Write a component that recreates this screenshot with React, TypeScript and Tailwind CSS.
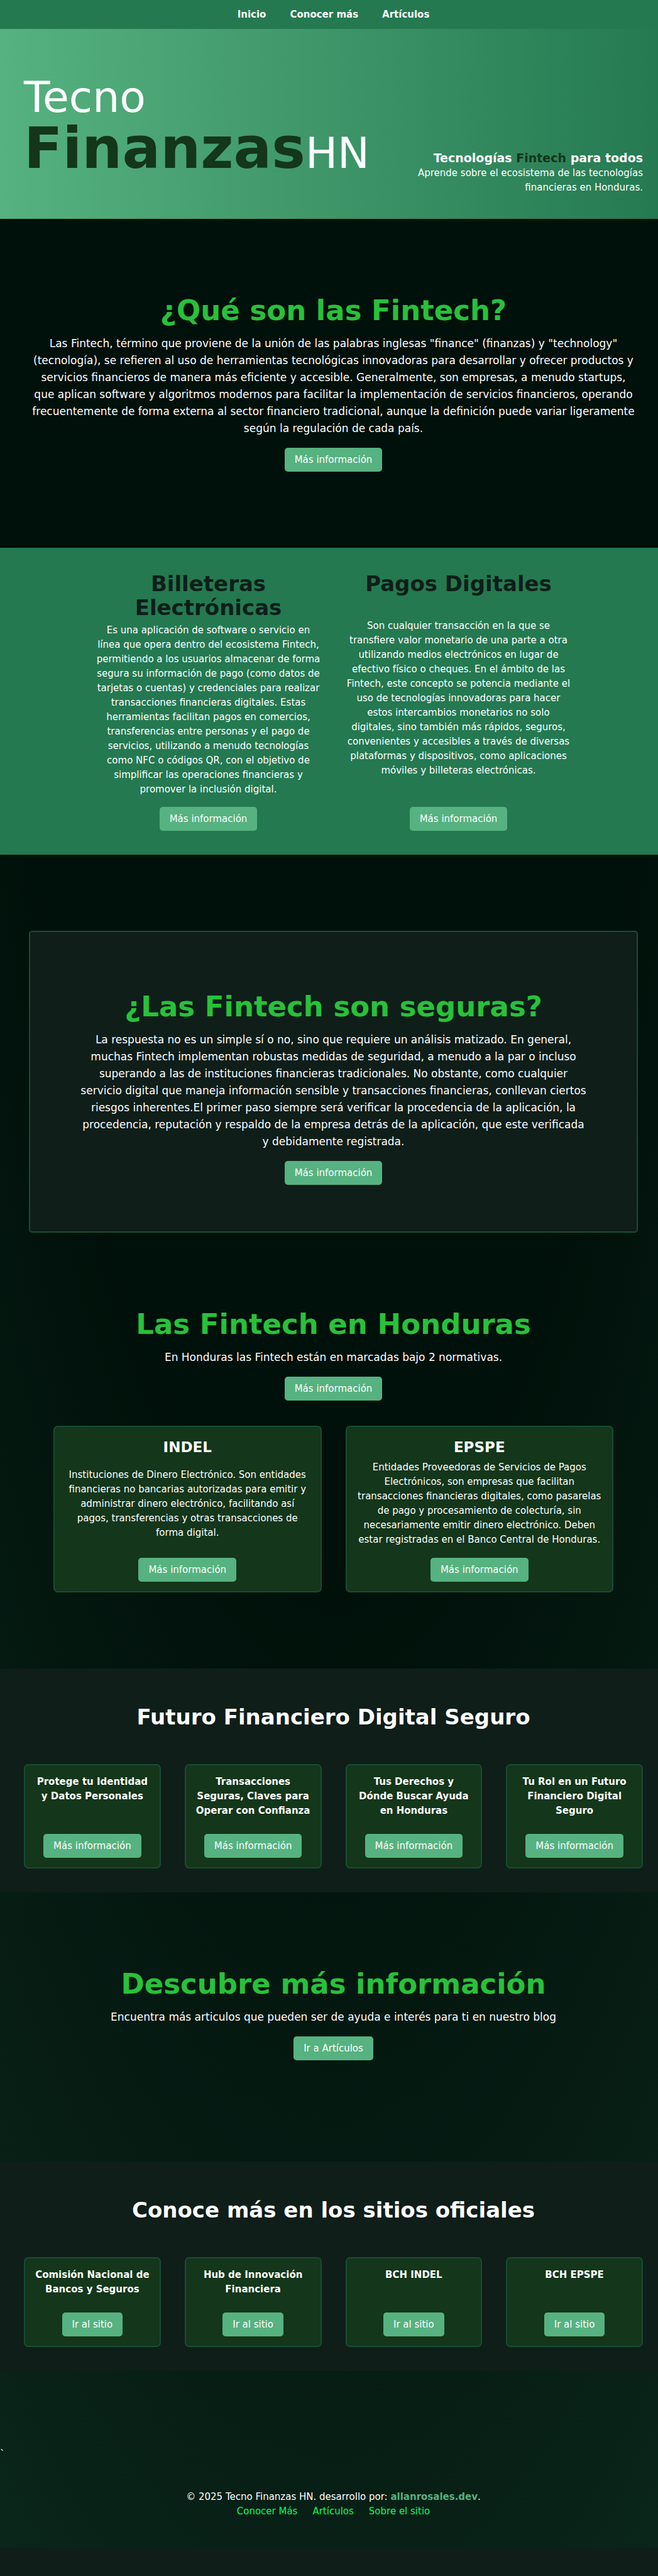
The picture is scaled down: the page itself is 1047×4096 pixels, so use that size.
import React from "react";

const MORE = "Más información";

function Btn({ children = MORE }: { children?: React.ReactNode }) {
  return (
    <a
      href="#"
      className="inline-block rounded-[5px] bg-[#56b280] px-4 py-2 text-[15px] leading-[22px] text-white"
    >
      {children}
    </a>
  );
}

function Intro({
  title,
  action = MORE,
  children,
}: {
  title: string;
  action?: string;
  children: React.ReactNode;
}) {
  return (
    <div className="flex flex-col items-center text-center">
      <h2 className="mb-3 text-[45px] leading-[54px] font-bold text-[#28c139]">{title}</h2>
      <p className="mb-[17px] text-[17px] leading-[27px]">{children}</p>
      <Btn>{action}</Btn>
    </div>
  );
}

function Wallet({ title, children }: { title: string; children: React.ReactNode }) {
  return (
    <article className="flex w-[360px] flex-col items-center">
      <h3 className="text-[34px] leading-[38px] font-bold text-[#0f1e19]">{title}</h3>
      <p className="my-auto py-[6px] leading-[23px]">{children}</p>
      <div className="mt-2.5 flex">
        <Btn />
      </div>
    </article>
  );
}

function Norm({ title, children }: { title: string; children: React.ReactNode }) {
  return (
    <article className="flex flex-1 flex-col items-center rounded-[7px] border-2 border-[#184d33] bg-[#14361a] px-4 py-[15px]">
      <h3 className="text-[23px] leading-[34px] font-bold">{title}</h3>
      <p className="my-auto py-1 leading-[23px]">{children}</p>
      <div className="mt-[13px] flex">
        <Btn />
      </div>
    </article>
  );
}

function Cards({ title, items, action }: { title: string; items: string[]; action: string }) {
  return (
    <section className="bg-[#0f1e19] px-[38px] pt-[52px] pb-[38px] text-center">
      <h2 className="text-[34px] leading-[51px] font-bold">{title}</h2>
      <div className="mt-[49px] grid grid-cols-4 gap-[38px]">
        {items.map((t) => (
          <article
            key={t}
            className="flex flex-col items-center justify-between gap-[25px] rounded-[7px] border-2 border-[#184d33] bg-[#14361a] px-3 py-[15px]"
          >
            <h3 className="leading-[23px] font-bold">{t}</h3>
            <Btn>{action}</Btn>
          </article>
        ))}
      </div>
    </section>
  );
}

export default function App() {
  return (
    <div className="overflow-hidden">
      <div className="w-[calc(100%+14px)] bg-[radial-gradient(125%_125%_at_50%_10%,#00100a_40%,#0f2f22_100%)] font-['DejaVu_Sans',sans-serif] text-[15px] leading-[23px] text-white">
        <nav className="flex h-[46px] items-center justify-center gap-[38px] bg-[#247951] font-bold">
          <a href="#">Inicio</a>
          <a href="#">Conocer más</a>
          <a href="#">Artículos</a>
        </nav>

        <header className="flex justify-between bg-linear-to-r from-[#56b280] to-[#247951] px-[38px] pt-[68px] pb-[38px]">
          <h1 className="pb-[26px] text-[68px]">
            <span className="block leading-[82px]">Tecno</span>
            <span className="block leading-[80px]">
              <span className="text-[90px] font-bold text-[#14361a]">Finanzas</span>HN
            </span>
          </h1>
          <div className="w-[380px] self-end text-right">
            <p className="text-[19px] leading-[26px] font-bold">
              Tecnologías <span className="text-[#14361a]">Fintech</span> para todos
            </p>
            <p>Aprende sobre el ecosistema de las tecnologías financieras en Honduras.</p>
          </div>
        </header>

        <section className="px-12 pt-[119px] pb-[121px]">
          <Intro title="¿Qué son las Fintech?">
            Las Fintech, término que proviene de la unión de las palabras inglesas "finance"
            (finanzas) y "technology" (tecnología), se refieren al uso de herramientas tecnológicas
            innovadoras para desarrollar y ofrecer productos y servicios financieros de manera más
            eficiente y accesible. Generalmente, son empresas, a menudo startups, que aplican
            software y algoritmos modernos para facilitar la implementación de servicios
            financieros, operando frecuentemente de forma externa al sector financiero tradicional,
            aunque la definición puede variar ligeramente según la regulación de cada país.
          </Intro>
        </section>

        <section className="flex justify-center gap-[38px] bg-[#247951] py-[38px] text-center">
          <Wallet title="Billeteras Electrónicas">
            Es una aplicación de software o servicio en línea que opera dentro del ecosistema
            Fintech, permitiendo a los usuarios almacenar de forma segura su información de pago
            (como datos de tarjetas o cuentas) y credenciales para realizar transacciones
            financieras digitales. Estas herramientas facilitan pagos en comercios, transferencias
            entre personas y el pago de servicios, utilizando a menudo tecnologías como NFC o
            códigos QR, con el objetivo de simplificar las operaciones financieras y promover la
            inclusión digital.
          </Wallet>
          <Wallet title="Pagos Digitales">
            Son cualquier transacción en la que se transfiere valor monetario de una parte a otra
            utilizando medios electrónicos en lugar de efectivo físico o cheques. En el ámbito de
            las Fintech, este concepto se potencia mediante el uso de tecnologías innovadoras para
            hacer estos intercambios monetarios no solo digitales, sino también más rápidos,
            seguros, convenientes y accesibles a través de diversas plataformas y dispositivos, como
            aplicaciones móviles y billeteras electrónicas.
          </Wallet>
        </section>

        <section className="mx-[46px] mt-[121px] rounded-[5px] border-2 border-[#184d33] bg-[#0f1e19] px-[78px] pt-[92px] pb-[74px]">
          <Intro title="¿Las Fintech son seguras?">
            La respuesta no es un simple sí o no, sino que requiere un análisis matizado. En
            general, muchas Fintech implementan robustas medidas de seguridad, a menudo a la par o
            incluso superando a las de instituciones financieras tradicionales. No obstante, como
            cualquier servicio digital que maneja información sensible y transacciones financieras,
            conllevan ciertos riesgos inherentes.El primer paso siempre será verificar la
            procedencia de la aplicación, la procedencia, reputación y respaldo de la empresa detrás
            de la aplicación, que este verificada y debidamente registrada.
          </Intro>
        </section>

        <section className="px-12 pt-[119px] pb-[121px]">
          <Intro title="Las Fintech en Honduras">
            En Honduras las Fintech están en marcadas bajo 2 normativas.
          </Intro>
          <div className="mx-[37px] mt-10 flex gap-[38px] text-center">
            <Norm title="INDEL">
              Instituciones de Dinero Electrónico. Son entidades financieras no bancarias
              autorizadas para emitir y administrar dinero electrónico, facilitando así pagos,
              transferencias y otras transacciones de forma digital.
            </Norm>
            <Norm title="EPSPE">
              Entidades Proveedoras de Servicios de Pagos Electrónicos, son empresas que facilitan
              transacciones financieras digitales, como pasarelas de pago y procesamiento de
              colecturía, sin necesariamente emitir dinero electrónico. Deben estar registradas en
              el Banco Central de Honduras.
            </Norm>
          </div>
        </section>

        <Cards
          title="Futuro Financiero Digital Seguro"
          action={MORE}
          items={[
            "Protege tu Identidad y Datos Personales",
            "Transacciones Seguras, Claves para Operar con Confianza",
            "Tus Derechos y Dónde\u00a0Buscar Ayuda en Honduras",
            "Tu Rol en un Futuro Financiero Digital Seguro",
          ]}
        />

        <section className="px-12 pt-[119px] pb-[161px]">
          <Intro title="Descubre más información" action="Ir a Artículos">
            Encuentra más articulos que pueden ser de ayuda e interés para ti en nuestro blog
          </Intro>
        </section>

        <Cards
          title="Conoce más en los sitios oficiales"
          action="Ir al sitio"
          items={[
            "Comisión Nacional de Bancos y Seguros",
            "Hub de Innovación Financiera",
            "BCH INDEL",
            "BCH EPSPE",
          ]}
        />

        <p className="pt-[121px]">`</p>

        <footer className="pt-[45px] pb-[46px] text-center">
          <p>
            © 2025 Tecno Finanzas HN. desarrollo por:{" "}
            <a href="#" className="font-bold text-[#56b280]">
              allanrosales.dev
            </a>
            .
          </p>
          <div className="flex justify-center gap-6 text-[#00ff5a]">
            <a href="#">Conocer Más</a>
            <a href="#">Artículos</a>
            <a href="#">Sobre el sitio</a>
          </div>
        </footer>
        <div className="h-[45px] bg-[#0f1e19]" />
      </div>
    </div>
  );
}
